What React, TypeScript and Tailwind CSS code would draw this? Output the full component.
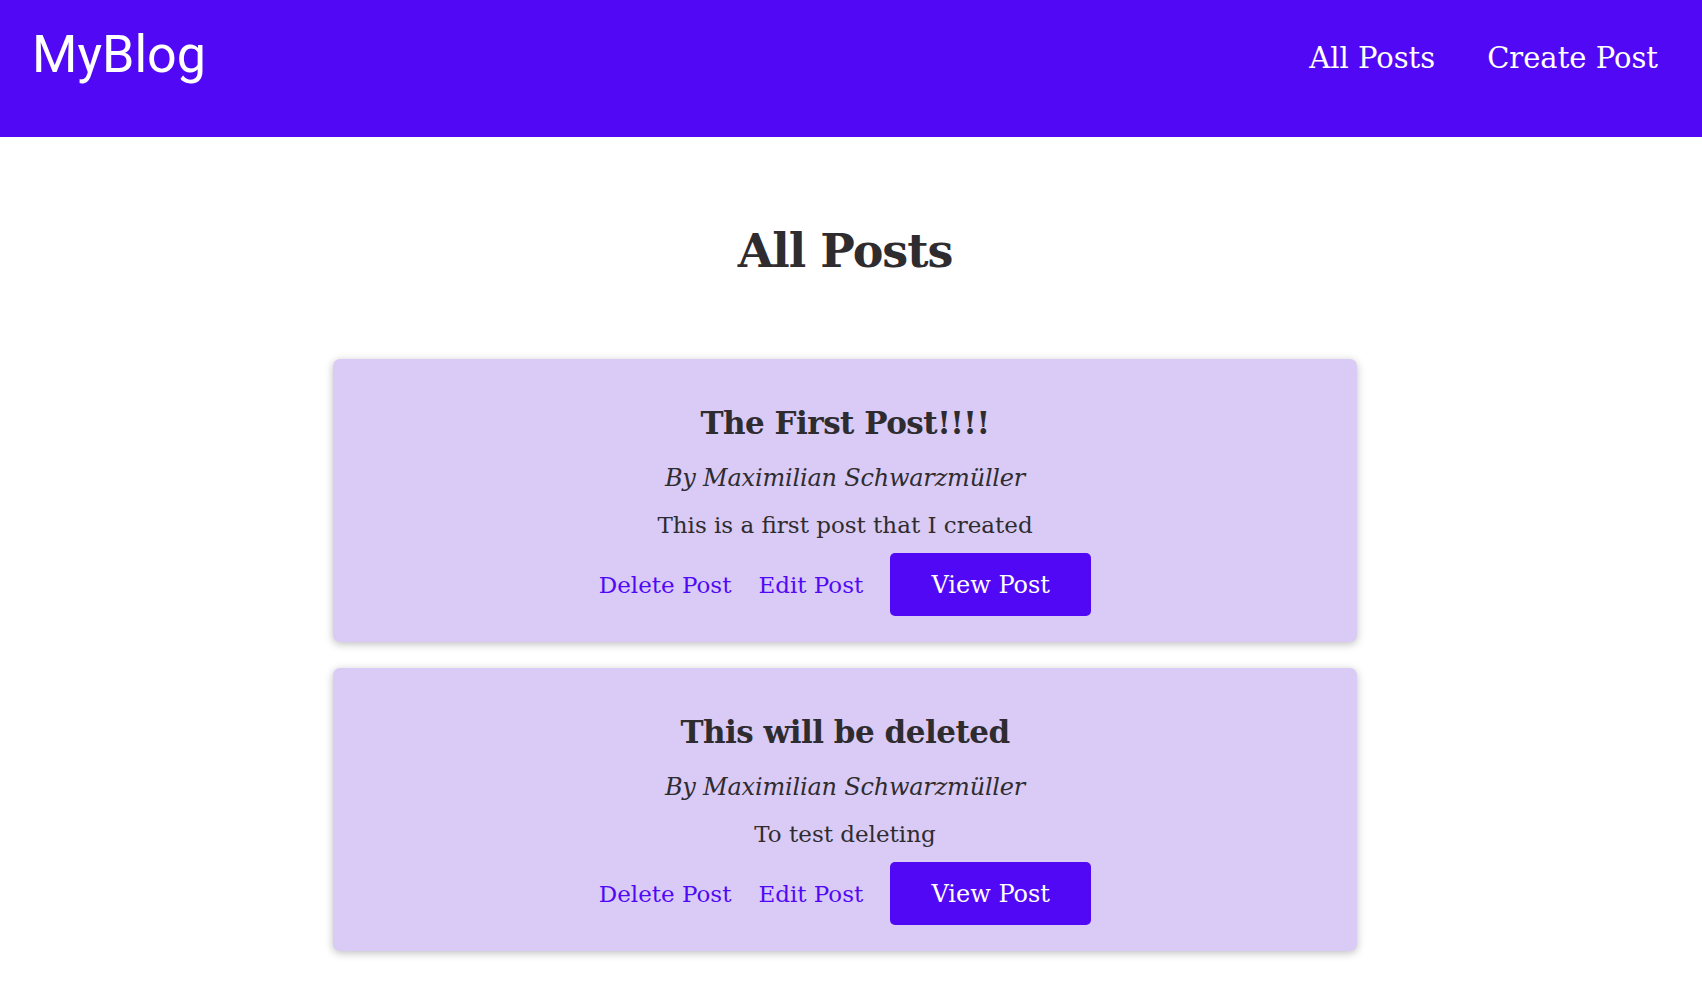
import React from "react";

const serif = "font-['DejaVu_Serif',serif]";

type Post = { title: string; author: string; body: string };

const posts: Post[] = [
  { title: "The First Post!!!!", author: "By Maximilian Schwarzmüller", body: "This is a first post that I created" },
  { title: "This will be deleted", author: "By Maximilian Schwarzmüller", body: "To test deleting" },
];

function Card({ p }: { p: Post }) {
  return (
    <article className="w-[1024px] h-[283px] rounded-[7px] bg-[#d9cbf5] shadow-[0_2px_8px_rgba(0,0,0,0.26)] flex flex-col items-center text-[#2f2c30]">
      <h2 className={`${serif} mt-[49px] text-[31px] leading-[31px] font-bold tracking-[-0.5px]`}>{p.title}</h2>
      <p className={`${serif} mt-[28px] text-[24px] leading-[22px] italic tracking-[-0.2px]`}>{p.author}</p>
      <p className={`${serif} mt-[25px] text-[23px] leading-[22px]`}>{p.body}</p>
      <div className="mt-[17px] flex items-center gap-[27px]">
        <a className={`${serif} text-[23px] leading-[22px] text-[#5109f5]`}>Delete Post</a>
        <a className={`${serif} text-[23px] leading-[22px] text-[#5109f5]`}>Edit Post</a>
        <button className={`${serif} h-[63px] w-[201px] rounded-[5px] bg-[#5109f5] text-white text-[24px] leading-[22px] flex items-center justify-center`}>
          View Post
        </button>
      </div>
    </article>
  );
}

export default function App() {
  return (
    <div className="min-h-[990px] bg-white">
      <header className="h-[137px] w-full bg-[#5109f5] flex items-start justify-between pl-8 pr-[44px]">
        <div className="mt-[29px] font-['Roboto',sans-serif] text-[52px] leading-[52px] text-white">MyBlog</div>
        <nav className={`${serif} mt-[44px] flex gap-[52px] text-[29px] leading-[29px] text-white`}>
          <a>All Posts</a>
          <a>Create Post</a>
        </nav>
      </header>
      <main className="w-[1690px] flex flex-col items-center">
        <h1 className={`${serif} mt-[92px] text-[46px] leading-[44px] font-bold tracking-[-1px] text-[#2f2c30]`}>All Posts</h1>
        <div className="mt-[86px] flex flex-col gap-[26px]">
          {posts.map((p) => (
            <Card key={p.title} p={p} />
          ))}
        </div>
      </main>
    </div>
  );
}
